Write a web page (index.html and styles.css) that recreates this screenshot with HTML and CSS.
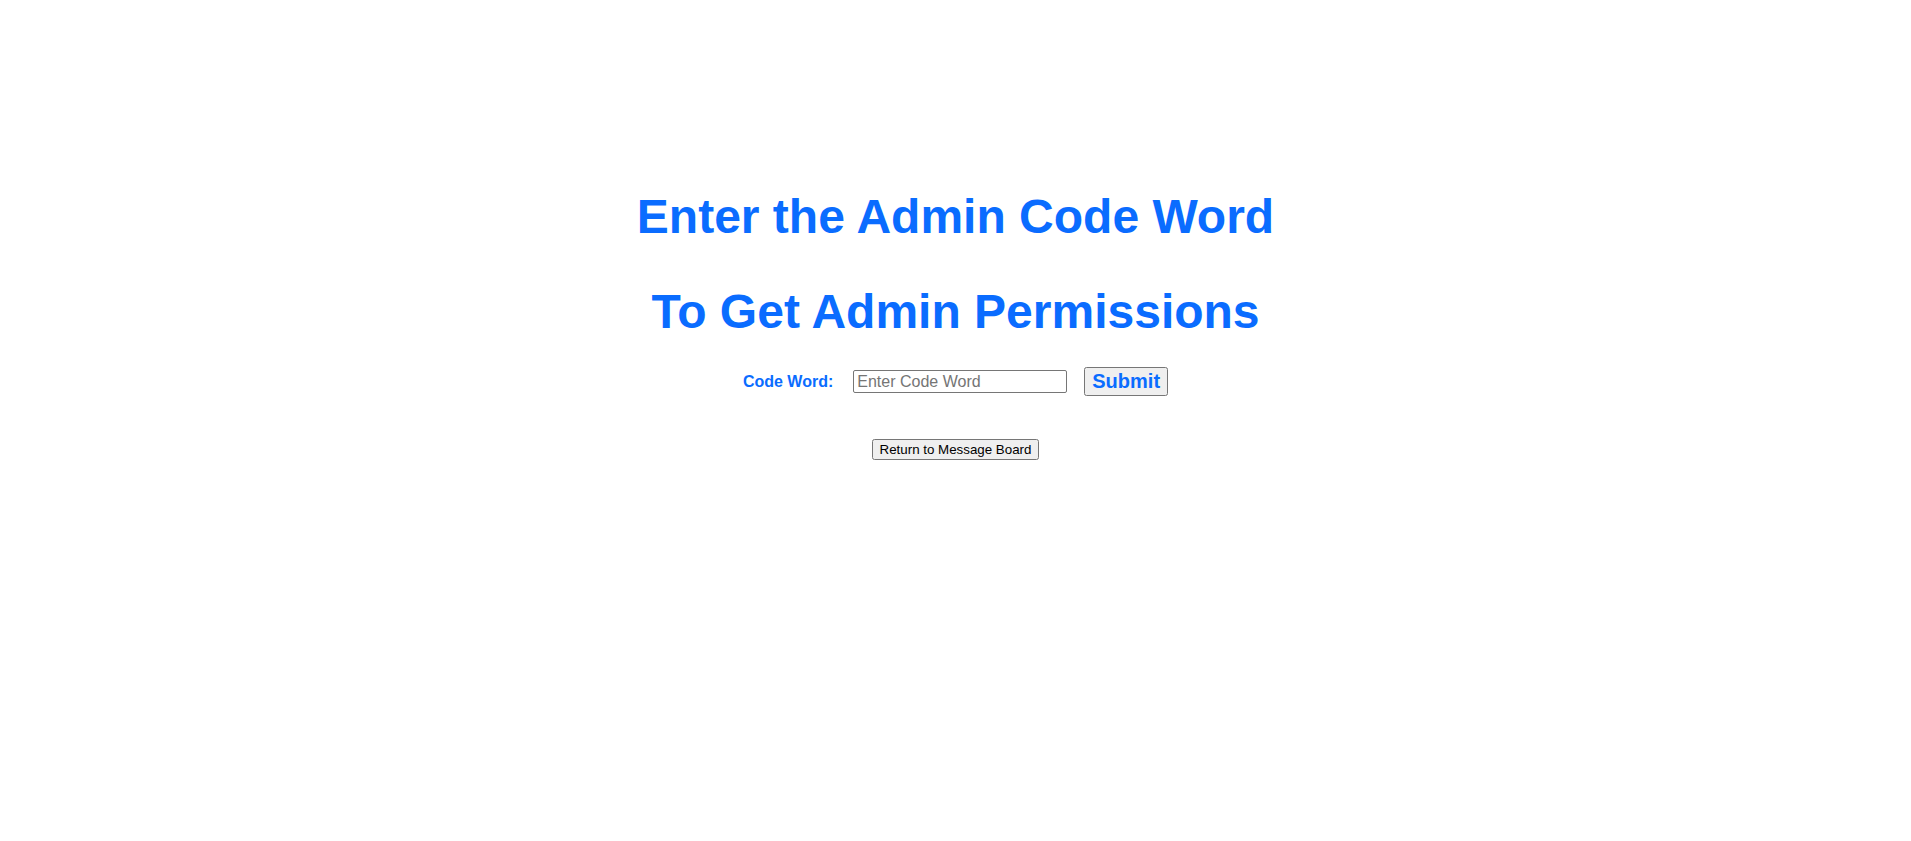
FILE: index.html
```html
<!DOCTYPE html>
<html lang="en">
<head>
<meta charset="utf-8">
<title>Admin Code Word</title>
<link rel="stylesheet" href="styles.css">
</head>
<body>
<main class="page">
  <h2 class="title">Enter the Admin Code Word</h2>
  <h2 class="title">To Get Admin Permissions</h2>
  <form class="code-form" onsubmit="return false;">
    <label class="code-label" for="code">Code Word:</label>
    <input class="code-input" id="code" type="text" placeholder="Enter Code Word">
    <button class="submit-btn" type="submit">Submit</button>
  </form>
  <div class="return-row">
    <button class="return-btn" type="button">Return to Message Board</button>
  </div>
</main>
</body>
</html>
```

FILE: styles.css
```css
html, body {
  margin: 0;
  padding: 0;
  background: #ffffff;
}

body {
  font-family: "Liberation Sans", Arial, sans-serif;
}

.page {
  display: flex;
  flex-direction: column;
  align-items: center;
  padding-top: 149px;
}

.title {
  margin: 40px 0 0;
  font-size: 48px;
  font-weight: bold;
  color: #0a6cff;
  line-height: normal;
  text-align: center;
}

.code-form {
  display: flex;
  align-items: center;
  margin-top: 28px;
}

.code-label {
  font-size: 16px;
  font-weight: bold;
  color: #0a6cff;
  margin-right: 20px;
}

.code-input {
  box-sizing: border-box;
  width: 214px;
  height: 23px;
  padding: 0 3px;
  font-family: "Liberation Sans", Arial, sans-serif;
  font-size: 16px;
  border: 1px solid #767676;
  border-radius: 2px;
  margin: 0 17px 0 0;
}

.submit-btn {
  font-family: "Liberation Sans", Arial, sans-serif;
  font-size: 20px;
  font-weight: bold;
  color: #0a6cff;
  margin: 0;
}

.return-row {
  margin-top: 43px;
}

.return-btn {
  font-family: "Liberation Sans", Arial, sans-serif;
  font-size: 13.333px;
  color: #000;
  margin: 0;
}
```
